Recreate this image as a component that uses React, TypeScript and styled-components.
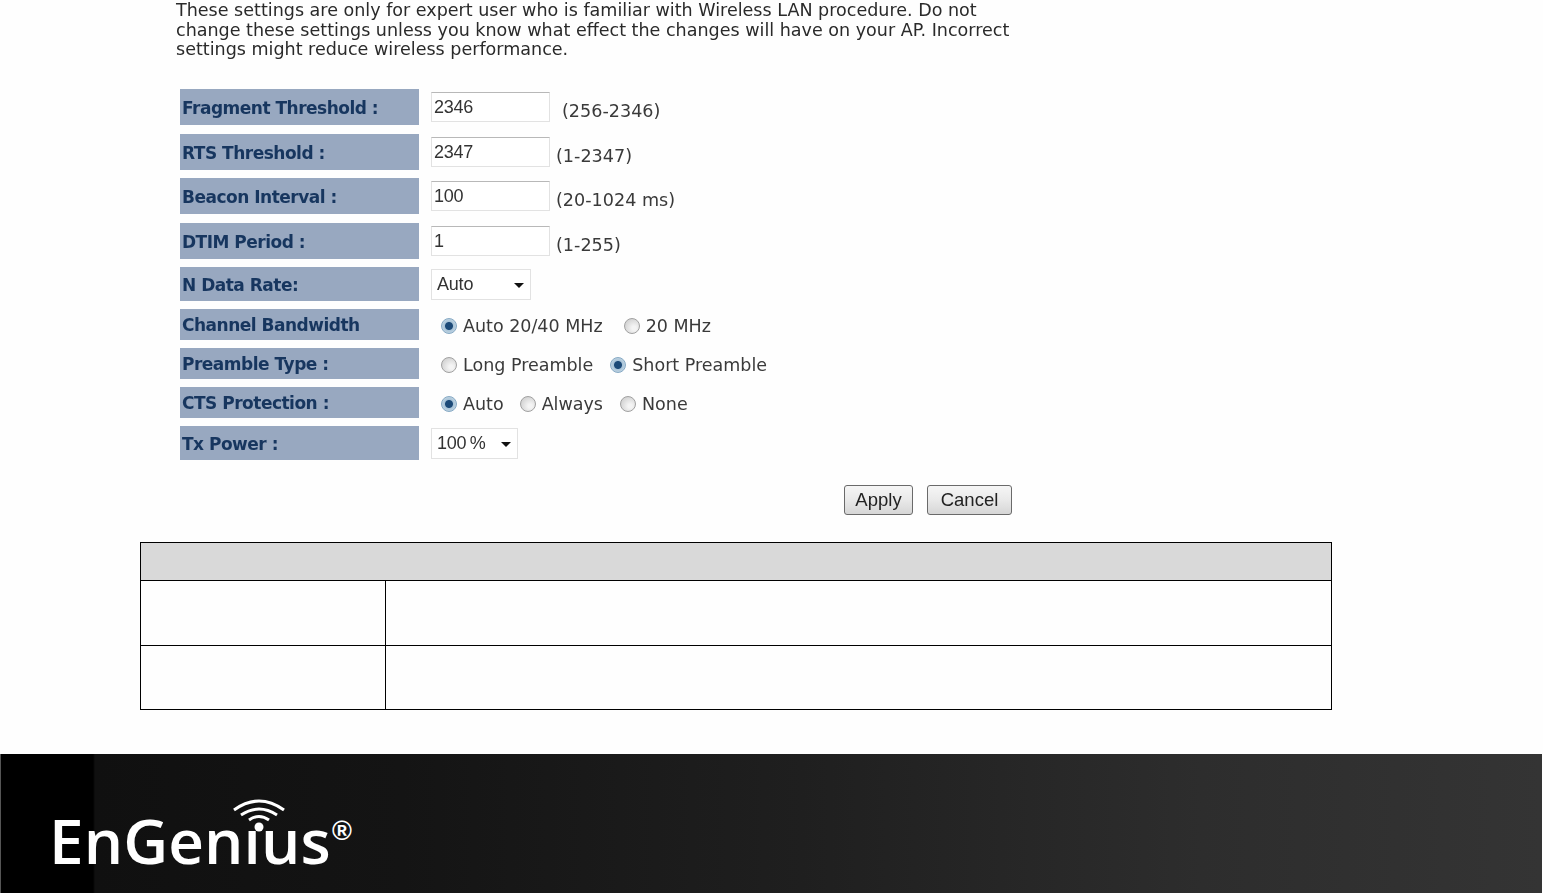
import React from "react";
import styled, { createGlobalStyle } from "styled-components";

const Global = createGlobalStyle`
  html, body { margin: 0; padding: 0; background: #fefefe; }
  body { width: 1543px; height: 893px; overflow: hidden; font-family: "DejaVu Sans", Verdana, sans-serif; }
`;
const Page = styled.div`
  width: 1543px;
  height: 893px;
  display: flex;
  flex-direction: column;
  overflow: hidden;
`;
const Intro = styled.p`
  margin: 1px 0 29px 176px;
  width: 845px;
  font-size: 17.55px;
  line-height: 19.5px;
  color: #2a2a2a;
  height: 59px;
  filter: blur(0.3px);
`;
const Form = styled.div`
  margin-left: 180px;
  display: flex;
  flex-direction: column;
  filter: blur(0.3px);
`;
const Row = styled.div<{ $h: number; $after: number }>`
  height: ${(p) => p.$h}px;
  margin-bottom: ${(p) => p.$after}px;
  display: flex;
  align-items: center;
`;
const Label = styled.div`
  width: 239px;
  height: 100%;
  flex: none;
  background: #98a8c0;
  color: #17365f;
  font-size: 17px;
  letter-spacing: -0.5px;
  font-weight: 700;
  display: flex;
  align-items: center;
  padding: 1px 0 0 2px;
  box-sizing: border-box;
  margin-right: 12px;
`;
const TextBox = styled.div`
  width: 119px;
  height: 30px;
  box-sizing: border-box;
  margin-top: -1px;
  border: 1px solid #e2e2e2;
  border-top-color: #b8b8b8;
  background: #fff;
  font-family: "Liberation Sans", Arial, sans-serif;
  font-size: 18px;
  letter-spacing: -0.3px;
  color: #333;
  padding: 2px 0 0 2px;
  line-height: 24px;
`;
const Hint = styled.span<{ $left: number }>`
  margin-left: ${(p) => p.$left}px;
  font-size: 17.6px;
  color: #3a3a3a;
  margin-top: 8px;
`;
const SelectBox = styled.div<{ $w: number }>`
  width: ${(p) => p.$w}px;
  height: 31px;
  box-sizing: border-box;
  border: 1px solid #e2e2e2;
  background: #fff;
  font-family: "Liberation Sans", Arial, sans-serif;
  font-size: 18px;
  letter-spacing: -0.2px;
  word-spacing: -1.5px;
  color: #333;
  display: flex;
  align-items: center;
  justify-content: space-between;
  padding: 0 6px 0 5px;
`;
const Caret = styled.i`
  width: 0;
  height: 0;
  border-left: 5px solid transparent;
  border-right: 5px solid transparent;
  border-top: 5px solid #111;
  margin-top: 2px;
`;
const Radios = styled.div`
  display: flex;
  align-items: center;
  padding: 3px 0 0 10px;
`;
const RadioItem = styled.span<{ $gap: number }>`
  display: flex;
  align-items: center;
  margin-right: ${(p) => p.$gap}px;
  font-size: 17.5px;
  color: #3a3a3a;
`;
const Dot = styled.i<{ $on?: boolean }>`
  width: 16px;
  height: 16px;
  border-radius: 50%;
  box-sizing: border-box;
  margin-right: 6px;
  border: 1px solid ${(p) => (p.$on ? "#86a9c4" : "#a0a0a0")};
  background: ${(p) =>
    p.$on
      ? "radial-gradient(circle, #1c4a78 0 3.5px, #a9c4d8 4.5px, #d5e2ec 100%)"
      : "radial-gradient(circle at 65% 65%, #f4f4f4 0 2px, #c6c6c6 100%)"};
`;
const Actions = styled.div`
  margin: 25px 0 27px 844px;
  display: flex;
  gap: 14px;
  filter: blur(0.3px);
`;
const Btn = styled.div<{ $w: number }>`
  width: ${(p) => p.$w}px;
  height: 30px;
  box-sizing: border-box;
  border: 1px solid #6a6a6a;
  border-radius: 3px;
  background: linear-gradient(#f6f6f6, #e9e9e9 50%, #d6d6d6);
  font-family: "Liberation Sans", Arial, sans-serif;
  font-size: 18.5px;
  color: #222;
  display: flex;
  align-items: center;
  justify-content: center;
`;
const Table = styled.div`
  margin-left: 140px;
  width: 1192px;
  height: 168px;
  box-sizing: border-box;
  border: 1px solid #000;
  display: grid;
  grid-template-columns: 245px 1fr;
  grid-template-rows: 38px 65px 1fr;
`;
const HeadCell = styled.div`
  grid-column: 1 / 3;
  background: #d9d9d9;
  border-bottom: 1px solid #000;
`;
const Cell = styled.div<{ $last?: boolean; $right?: boolean }>`
  border-bottom: ${(p) => (p.$last ? "none" : "1px solid #000")};
  border-right: ${(p) => (p.$right ? "none" : "1px solid #000")};
`;
const Footer = styled.div`
  margin-top: 44px;
  width: 1542px;
  height: 139px;
  flex: none;
  border-left: 1px solid #555;
  box-sizing: border-box;
  background: linear-gradient(90deg, #000 0 92px, #101010 94px, #141414 400px, #1f1f1f 800px, #2d2d2d 1200px, #343434 100%);
  padding: 43px 0 0 48px;
`;
const Logo = styled.div`
  position: relative;
  display: inline-block;
  color: #fff;
  font-family: "Open Sans", sans-serif;
  font-size: 62px;
  line-height: 86px;
  font-weight: 600;
  letter-spacing: 0.1px;
`;
const Wifi = styled.svg`
  position: absolute;
  left: 183px;
  top: 0;
`;
const Reg = styled.span`
  position: absolute;
  left: 283px;
  top: 20px;
  font-family: "Liberation Sans", sans-serif;
  font-size: 27px;
  line-height: 28px;
`;

const rows = [
  { label: "Fragment Threshold :", value: "2346", hint: "(256-2346)", left: 12, h: 36, after: 9 },
  { label: "RTS Threshold :", value: "2347", hint: "(1-2347)", left: 6, h: 36, after: 8 },
  { label: "Beacon Interval :", value: "100", hint: "(20-1024 ms)", left: 6, h: 36, after: 9 },
  { label: "DTIM Period :", value: "1", hint: "(1-255)", left: 6, h: 36, after: 8 },
];
const radios = [
  { label: "Channel Bandwidth", h: 31, items: [["Auto 20/40 MHz", 1, 21], ["20 MHz", 0, 0]] },
  { label: "Preamble Type :", h: 31, items: [["Long Preamble", 0, 17], ["Short Preamble", 1, 0]] },
  { label: "CTS Protection :", h: 31, items: [["Auto", 1, 16], ["Always", 0, 17], ["None", 0, 0]] },
] as const;

export default function App() {
  return (
    <Page>
      <Global />
      <Intro>
        These settings are only for expert user who is familiar with Wireless LAN procedure. Do not change these
        settings unless you know what effect the changes will have on your AP. Incorrect settings might reduce
        wireless performance.
      </Intro>
      <Form>
        {rows.map((r) => (
          <Row key={r.label} $h={r.h} $after={r.after}>
            <Label>{r.label}</Label>
            <TextBox>{r.value}</TextBox>
            <Hint $left={r.left}>{r.hint}</Hint>
          </Row>
        ))}
        <Row $h={34} $after={8}>
          <Label>N Data Rate:</Label>
          <SelectBox $w={100}>
            Auto
            <Caret />
          </SelectBox>
        </Row>
        {radios.map((r) => (
          <Row key={r.label} $h={r.h} $after={8}>
            <Label>{r.label}</Label>
            <Radios>
              {r.items.map(([text, on, gap]) => (
                <RadioItem key={text} $gap={gap}>
                  <Dot $on={!!on} />
                  {text}
                </RadioItem>
              ))}
            </Radios>
          </Row>
        ))}
        <Row $h={34} $after={0}>
          <Label>Tx Power :</Label>
          <SelectBox $w={87}>
            100 %
            <Caret />
          </SelectBox>
        </Row>
      </Form>
      <Actions>
        <Btn $w={69}>Apply</Btn>
        <Btn $w={85}>Cancel</Btn>
      </Actions>
      <Table>
        <HeadCell />
        <Cell />
        <Cell $right />
        <Cell $last />
        <Cell $last $right />
      </Table>
      <Footer>
        <Logo aria-label="EnGenius">
          EnGenıus
          <Wifi width="56" height="36" viewBox="0 0 56 36" fill="none" stroke="#fff" strokeWidth="3">
            <path d="M2 13 Q27 -5 52 13" />
            <path d="M9 18 Q27 6 45 18" />
            <path d="M17 23 Q27 16 37 23" />
            <circle cx="27" cy="30" r="4.5" fill="#fff" stroke="none" />
          </Wifi>
          <Reg>®</Reg>
        </Logo>
      </Footer>
    </Page>
  );
}
